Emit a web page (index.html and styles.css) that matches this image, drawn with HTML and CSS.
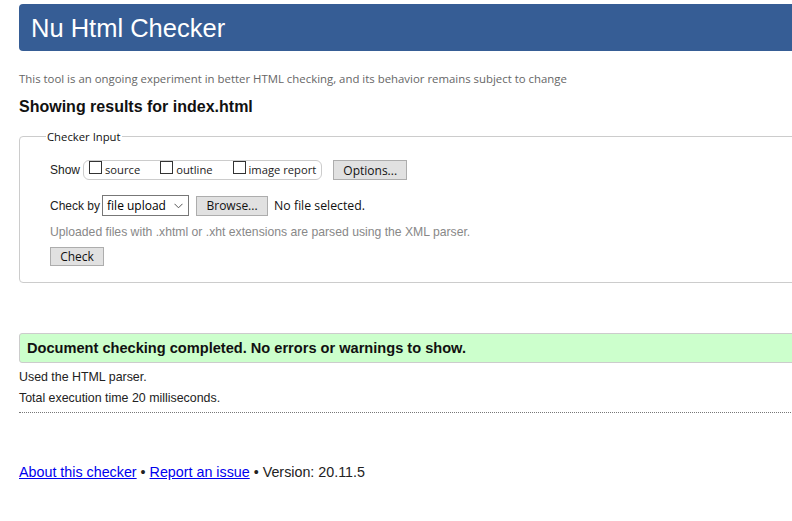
FILE: index.html
```html
<!DOCTYPE html>
<html>
<head>
<meta charset="utf-8">
<link rel="stylesheet" href="styles.css">
</head>
<body>
<div class="page">
  <h1 class="banner">Nu Html Checker</h1>
  <p class="intro">This tool is an ongoing experiment in better HTML checking, and its behavior remains subject to change</p>
  <h2 class="results">Showing results for index.html</h2>
  <fieldset class="input">
    <legend class="legend">Checker Input</legend>
    <div class="row show-row">
      <span class="lbl">Show</span>
      <span class="pill">
        <label class="cb"><span class="box"></span>source</label>
        <label class="cb"><span class="box"></span>outline</label>
        <label class="cb"><span class="box"></span>image report</label>
      </span>
      <span class="btn opt">Options...</span>
    </div>
    <div class="row by-row">
      <span class="lbl">Check by</span>
      <span class="select">file upload<svg class="chev" width="9" height="6" viewBox="0 0 9 6"><path d="M0.5 0.8 L4.5 4.8 L8.5 0.8" fill="none" stroke="#555" stroke-width="1"/></svg></span>
      <span class="btn browse">Browse...</span>
      <span class="nofile">No file selected.</span>
    </div>
    <p class="note">Uploaded files with .xhtml or .xht extensions are parsed using the XML parser.</p>
    <span class="btn check">Check</span>
  </fieldset>
  <p class="success">Document checking completed. No errors or warnings to show.</p>
  <p class="info first">Used the HTML parser.</p>
  <p class="info">Total execution time 20 milliseconds.</p>
  <hr class="sep">
  <p class="footer"><a href="#">About this checker</a> • <a href="#">Report an issue</a> • Version: 20.11.5</p>
</div>
</body>
</html>
```
FILE: styles.css
```css
html, body { margin: 0; padding: 0; background: #fff; overflow: hidden; }
body { font-family: "Liberation Sans", Arial, sans-serif; color: #222; }
.page { width: 800px; padding: 4px 0 0 19px; }
.banner {
  margin: 0; height: 47px; box-sizing: border-box;
  background: #365d95; color: #fff; border-radius: 4px;
  font-weight: normal; font-size: 25.5px; line-height: 48px; padding-left: 12px;
}
.intro { margin: 20px 0 0; font-family: "Open Sans", sans-serif; font-size: 11.4px; color: #666; line-height: 16px; }
.results { margin: 10px 0 0; font-size: 16px; font-weight: bold; line-height: 20px; color: #111; }
.input {
  margin: 12px 0 0; border: 1px solid #ccc; border-radius: 4px;
  padding: 16px 0 16px 30px; height: 154px; box-sizing: border-box;
  display: flex; flex-direction: column; align-items: flex-start;
}
.legend { font-family: "Open Sans", sans-serif; font-size: 11.3px; padding: 0 1px; margin-left: -4px; color: #111; }
.row { display: flex; align-items: center; }
.lbl { font-size: 12px; color: #222; }
.pill {
  display: flex; align-items: center; margin-left: 3px;
  border: 1px solid #ccc; border-radius: 6px; height: 18px; padding: 0 5px 0 5px;
}
.cb { display: flex; align-items: center; font-family: "Open Sans", sans-serif; font-size: 11.2px; color: #222; margin-right: 20px; line-height: 18px; }
.cb:last-child { margin-right: 0; }
.box { width: 13px; height: 13px; border: 1px solid #333; margin-right: 3px; box-sizing: border-box; margin-top: -5px; }
.btn {
  display: inline-flex; align-items: center; justify-content: center;
  background: #e1e1e1; border: 1px solid #adadad; box-sizing: border-box;
  font-family: "Open Sans", sans-serif; font-size: 12px; color: #111; height: 20px;
}
.opt { width: 74px; margin-left: 11px; }
.by-row { margin-top: 15px; }
.select {
  display: inline-flex; align-items: center; width: 87px; height: 21px; box-sizing: border-box;
  border: 1px solid #777; font-family: "Open Sans", sans-serif; font-size: 12px; color: #000;
  padding-left: 4px; margin-left: 2px; position: relative;
}
.chev { position: absolute; right: 5px; top: 7px; }
.browse { width: 72px; margin-left: 7px; }
.nofile { font-family: "Open Sans", sans-serif; font-size: 12.3px; color: #111; margin-left: 6px; }
.note { margin: 8px 0 0; font-size: 12.2px; color: #888; line-height: 16px; }
.check { width: 54px; margin-top: 7px; }
.success {
  margin: 50px 0 0; background: #ccffcc; border: 1px solid #ccc; border-radius: 3px;
  height: 30px; box-sizing: border-box; padding-left: 7px;
  font-size: 14.6px; font-weight: bold; line-height: 28px; color: #111;
}
.info { margin: 6px 0 0; font-size: 12.4px; line-height: 15px; color: #222; }
.info.first { margin-top: 7px; }
.sep { margin: 6px 0 0; border: 0; border-top: 1px dotted #777; height: 0; }
.footer { margin: 51px 0 0; font-size: 14.3px; line-height: 16px; color: #222; }
.footer a { color: #0000ee; }
```
